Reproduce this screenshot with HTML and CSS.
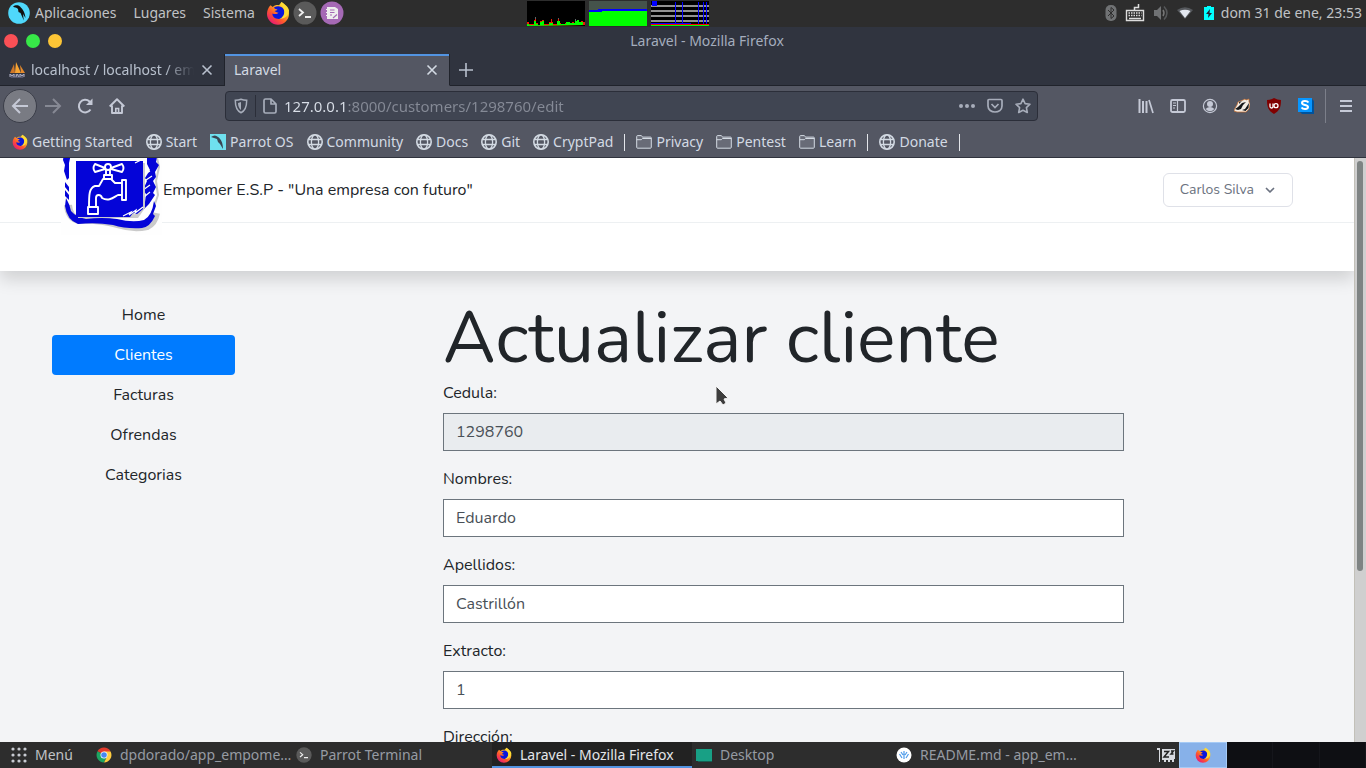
FILE: index.html
```html
<!DOCTYPE html>
<html lang="es">
<head>
<meta charset="utf-8">
<meta name="viewport" content="width=device-width, initial-scale=1">
<title>Laravel</title>
<link rel="stylesheet" href="styles.css">
</head>
<body class="desktop">
<svg class="sprite" aria-hidden="true">
  <defs>
    <linearGradient id="flame" x1="1" y1="0" x2="0.2" y2="1"><stop offset="0" stop-color="#fff44f"/><stop offset=".35" stop-color="#ffbd27"/><stop offset=".65" stop-color="#ff5a2b"/><stop offset="1" stop-color="#e5127d"/></linearGradient>
    <symbol id="firefox" viewBox="0 0 24 24"><path d="M4.500 4.200 6.800 6C8.500 4.300 10.500 3.800 13 4.200L15.500 1C19 3.500 23 7.500 23 12.700A11 11 0 0 1 1 12.700C1 9.500 2.300 6.500 4.500 4.200Z" fill="url(#flame)"/><path d="M8 6.500C11 4.500 15.500 4.800 17.500 8c2.500 5 .5 10-4.500 10-4.500 0-7-3-6.500-5.500 2 1 5 .8 6-.8-2 0-3-1-4-1.700 1-.5 2-.5 3-1.300-1-1-3-.4-3.500-2.200Z" fill="#0b16dc"/><path d="M15.500 1c-1 3 2.500 5 2.800 8.500.5 4.500-2.300 7.500-5 8.500 6 0 9.700-4 9.700-8.500C22.500 5.500 18 3 15.500 1Z" fill="#ffdc35"/></symbol>
    <symbol id="terminal" viewBox="0 0 24 24"><circle cx="12" cy="12" r="11.500" fill="#5a5a5a"/><path d="m6 8 4 3.500L6 15M12 16h6" fill="none" stroke="#eee" stroke-width="1.800"/></symbol>
    <symbol id="globe" viewBox="0 0 16 16"><g fill="none" stroke="currentColor" stroke-width="1.300"><circle cx="8" cy="8" r="7.200" stroke-width="1.600"/><ellipse cx="8" cy="8" rx="3.600" ry="7.200"/><path d="M1.500 5.500h13M1.500 10.500h13"/></g></symbol>
    <symbol id="folder" viewBox="0 0 16 16"><path d="M.7 13.300V2.500c0-.6.300-.9.900-.9h3.600c.6 0 .9.900 1.200 1.500h8.100c.5 0 .8.300.8.800v9.400c0 .5-.3.900-.8.900H1.500c-.5 0-.8-.4-.8-.9ZM.7 5.700h4.600l1.200-1.200h8.800" fill="#dcdee8" fill-opacity=".15" stroke="currentColor"/></symbol>
    <symbol id="close" viewBox="0 0 16 16"><path d="m3.500 3.500 9 9m0-9-9 9" fill="none" stroke="currentColor" stroke-width="1.600"/></symbol>
  </defs>
</svg>

<header class="panel">
  <nav class="panel-menu">
    <button class="panel-button"><svg class="icon-22" viewBox="0 0 22 22"><circle cx="11" cy="11" r="10.800" fill="#4fd8fb"/><path d="M5 4.500c2-1.500 5-2 7 0 3 3 5 6 5.500 11.500l-2.500-4 .8 6.500-3.300-7.500-2-1-.5-3C8.500 5 6.500 6 5 4.500Z" fill="#111"/></svg>Aplicaciones</button>
    <button class="panel-button">Lugares</button>
    <button class="panel-button">Sistema</button>
  </nav>
  <div class="launchers">
    <button class="plain" aria-label="Firefox"><svg class="icon-24"><use href="#firefox"/></svg></button>
    <button class="plain" aria-label="Terminal"><svg class="icon-24"><use href="#terminal"/></svg></button>
    <button class="plain" aria-label="Editor"><svg class="icon-24" viewBox="0 0 24 24"><circle cx="12" cy="12" r="11.500" fill="#a569b5"/><path d="M7 6h8l3 2v10H7Z" fill="#eee"/><path d="M6 8.500h2M6 11.500h2M6 14.500h2" stroke="#eee"/><path d="M10 9h4.500m-4.500 2.500h4.500M10 14h2m1 3 4-3.500" stroke="#a569b5" stroke-width="1.200"/></svg></button>
  </div>
  <div class="monitors">
    <svg class="monitor" viewBox="0 0 58 25"><path fill="#000" d="M0 0h58v25H0z"/><path d="M8.500 16v4M24.500 18v4M31.500 17v4M48.500 18v4" stroke="#5d6a6a"/><path d="M0 25V21h2v2h5v-4h1v-1h1v4h2v2h2v-4h2v-1h2v4h5v-2h2v-3h1v3h1v2h4v-1h1v-4h1v4h2v2h4v-2h2v-1h2v1h3v-1h2v1h2v-2h2v-1h1v2h2v-1h2v1h2v3Z" fill="#f01800"/><path d="M0 25V23h2v1h5v-4h2v3h2v1h2v-3h2v-1h2v4h5v-2h4v2h4v-4h3v3h6v-2h4v1h5v-2h2v-1h2v2h4v3Z" fill="#0f0"/></svg>
    <svg class="monitor" viewBox="0 0 58 25"><path fill="#45534b" d="M0 0h58v25H0z"/><path fill="#00f" d="M0 9h9V8h49v4H0z"/><path fill="#0f0" d="M0 11h13v-1h45v15H0z"/></svg>
    <svg class="monitor" viewBox="0 0 58 25"><path fill="#000" d="M0 0h58v25H0z"/><path d="M0 5h58M0 10h58M0 15h58M0 20h58" stroke="#929292" stroke-width="2"/><path d="M24.500 1v22M31.500 1v22M47.500 1v22M52.500 1v22M55.500 1v22" stroke="#00f"/><path fill="#00f" d="M1 0h5v5H1zM0 22h40v1H0z"/><path fill="red" d="M0 23h58v1H0z"/><path fill="#0f0" d="M0 24h58v1H0z"/></svg>
  </div>
  <div class="tray">
    <svg class="tray-bt" viewBox="0 0 12 18"><rect x=".5" y="1" width="11" height="16" rx="5" fill="#707274"/><path d="m3 6 6 6-3 2.500v-11L9 6l-6 6" fill="none" stroke="#2d2d2d"/></svg>
    <svg class="tray-kb" viewBox="0 0 20 20"><path d="M9.500 7V4.500h4V1" fill="none" stroke="#ddd" stroke-width="1.500"/><path d="M1.500 7.500h17v10h-17z" fill="none" stroke="#ddd" stroke-width="1.400"/><path d="M3.500 10h13M3.500 12.500h13" stroke="#ddd" stroke-width="1.500" stroke-dasharray="1.500 1"/><path d="M4 15.500h12" stroke="#ddd" stroke-width="1.500"/></svg>
    <svg class="tray-vol" viewBox="0 0 16 16"><path d="M1 5h3l4-4v14l-4-4H1Z" fill="#707274"/><path d="M10 5q2 3 0 6" fill="none" stroke="#777" stroke-width="1.500"/><path d="M11 1.500q6 6.500 0 13" fill="none" stroke="#56585a" stroke-width="1.500"/></svg>
    <svg class="tray-wifi" viewBox="0 0 16 16"><path d="M0 5Q8-.5 16 5l-8 9Z" fill="#55585c"/><path d="M2.500 6Q8 3.500 13.500 6L8 13Z" fill="#e3e7ef"/></svg>
    <svg class="tray-bat" viewBox="0 0 12 16"><path d="M1 2h3V1h4v1h3v13H1Z" fill="#0ff"/><path d="M7 4 3 9h2.500L5 13l4-5H6.500Z" fill="#223"/></svg>
    <span class="clock">dom 31 de ene, 23:53</span>
  </div>
</header>

<section class="browser">
  <div class="titlebar">
    <div class="lights"><button class="light red" aria-label="Cerrar"></button><button class="light green" aria-label="Maximizar"></button><button class="light yellow" aria-label="Minimizar"></button></div>
    <span class="window-title">Laravel - Mozilla Firefox</span>
  </div>
  <div class="tabs">
    <div class="tab"><svg class="icon-18" viewBox="0 0 18 18"><path d="M2 12 6 3l1 9Z" fill="#cf7728"/><path d="m7 12 1-11 5 11Z" fill="#f7a433"/><path d="m13 12-1-8 5 8Z" fill="#e58a2c"/><path d="M1 13h16l-2 4H3Z" fill="#53556b"/><path d="M2 16v-3l2 2 2-2v3m2 0 1-3 2 3m1 0v-3l2 2 2-2v3" fill="none" stroke="#a6a8ba"/></svg><span class="tab-label fade">localhost / localhost / emp</span><button class="plain tab-close" aria-label="Cerrar pestaña"><svg class="icon-16"><use href="#close"/></svg></button></div>
    <div class="tab active"><span class="tab-label">Laravel</span><button class="plain tab-close" aria-label="Cerrar pestaña"><svg class="icon-16"><use href="#close"/></svg></button></div>
    <button class="plain new-tab" aria-label="Nueva pestaña"><svg class="icon-16" viewBox="0 0 16 16"><path d="M8 1v14M1 8h14" stroke="currentColor" stroke-width="1.600"/></svg></button>
  </div>
  <div class="toolbar">
    <div class="nav-buttons">
      <button class="plain back" aria-label="Atrás"><svg class="icon-18" viewBox="0 0 18 18"><path d="M17 9H2m7-7L2 9l7 7" fill="none" stroke="currentColor" stroke-width="2"/></svg></button>
      <button class="plain nav-icon dim" aria-label="Adelante"><svg class="icon-18" viewBox="0 0 18 18"><path d="M1 9h15M9 2l7 7-7 7" fill="none" stroke="currentColor" stroke-width="2"/></svg></button>
      <button class="plain nav-icon" aria-label="Recargar"><svg class="icon-16" viewBox="0 0 16 16"><path d="M13.500 11.500A6.300 6.300 0 1 1 12.500 3.500L14 5" fill="none" stroke="currentColor" stroke-width="2"/><path d="M15.500.5v6.500H9Z" fill="currentColor"/></svg></button>
      <button class="plain nav-icon" aria-label="Inicio"><svg class="icon-16" viewBox="0 0 16 16"><path d="M.7 8.500 8 1.300l7.300 7.200M3 7.500V15h10V7.500" fill="none" stroke="currentColor" stroke-width="1.900" stroke-linejoin="round"/><path d="M6.800 15v-4.500h2.800V15" fill="none" stroke="currentColor" stroke-width="1.600"/></svg></button>
    </div>
    <div class="urlbar">
      <svg class="icon-16" viewBox="0 0 16 16"><path d="M8 1.300c2 .8 4 1 5.700 1C13.700 9 12 13 8 14.700 4 13 2.300 9 2.300 2.300c1.700 0 3.700-.2 5.700-1Z" fill="none" stroke="currentColor" stroke-width="1.500"/><path d="M8 4v8C6 10.500 5 8 5 5Z" fill="currentColor"/></svg>
      <span class="url-divider"></span>
      <svg class="icon-16" viewBox="0 0 16 16"><path d="M2 2.500q0-1.500 1.500-1.500H9l5 5v7.500q0 1.500-1.500 1.500h-9Q2 15 2 13.500ZM9 1v5h5" fill="none" stroke="currentColor" stroke-width="1.700" stroke-linejoin="round"/></svg>
      <input class="url" type="text" aria-label="Dirección web" value="127.0.0.1:8000/customers/1298760/edit">
      <div class="url-actions">
        <button class="plain" aria-label="Acciones"><svg class="icon-16" viewBox="0 0 16 16" fill="currentColor"><circle cx="2" cy="8" r="2"/><circle cx="8" cy="8" r="2"/><circle cx="14" cy="8" r="2"/></svg></button>
        <button class="plain" aria-label="Pocket"><svg class="icon-16" viewBox="0 0 16 16"><path d="M2 1.500h12q1 0 1 1V8c0 8-14 8-14 0V2.500q0-1 1-1Z" fill="none" stroke="currentColor" stroke-width="1.700"/><path d="m4.500 6 3.500 3.500L11.500 6" fill="none" stroke="currentColor" stroke-width="1.700"/></svg></button>
        <button class="plain" aria-label="Marcador"><svg class="icon-16" viewBox="0 0 16 16"><path d="m8 1.200 2.100 4.400 4.900.6-3.600 3.400.9 4.900L8 12.200l-4.300 2.300.9-4.900L1 6.200l4.900-.6Z" fill="none" stroke="currentColor" stroke-width="1.600" stroke-linejoin="round"/></svg></button>
      </div>
    </div>
    <div class="extensions">
      <button class="plain" aria-label="Biblioteca"><svg class="icon-16" viewBox="0 0 16 16"><path d="M1.500 1v14M5 3v12M8.500 3v12" stroke="currentColor" stroke-width="2"/><path d="m11 2 4 13" stroke="currentColor" stroke-width="1.700"/></svg></button>
      <button class="plain" aria-label="Barra lateral"><svg class="icon-16" viewBox="0 0 16 16"><rect x="1" y="2" width="14" height="12" rx="1.500" fill="none" stroke="currentColor" stroke-width="1.800"/><path d="M7.500 2v12M3 5h3M3 7.500h3M3 10h2" stroke="currentColor" stroke-width="1.200"/></svg></button>
      <button class="plain" aria-label="Cuenta"><svg class="icon-16" viewBox="0 0 16 16"><circle cx="8" cy="8" r="6.600" fill="none" stroke="currentColor" stroke-width="1.200"/><circle cx="8" cy="6" r="3" fill="currentColor"/><path d="M3.500 11q4.500-4 9 0Q8 15.500 3.500 11Z" fill="currentColor"/></svg></button>
      <button class="plain" aria-label="Privacy Badger"><svg class="icon-16" viewBox="0 0 16 16"><path d="M.5 11 3 7l1-3 5-2 2-1 1 1 3-1v3l1 2-1 5-3 3H3l-3-1Z" fill="#f3ece4" stroke="#c96d2b" stroke-width=".7"/><path d="m1 11 3-2 4-4 4-1-3 3-2 4-3 1Zm7 1 3-1 4-6-.5 5-3 3Z" fill="#151719"/><path d="m5 4 3-1-3 3Z" fill="#333"/></svg></button>
      <button class="plain" aria-label="uBlock Origin"><svg class="icon-16" viewBox="0 0 16 16"><path d="M8 0q3.500 2 7 2c0 8-2 11-7 14-5-3-7-6-7-14q3.500 0 7-2Z" fill="#800000"/><path d="M4 5.500v3q0 1.500 1.500 1.500T7 8.500v-3" fill="none" stroke="#fff" stroke-width="1.300"/><circle cx="10" cy="7.700" r="2" fill="none" stroke="#fff" stroke-width="1.300"/></svg></button>
      <button class="plain" aria-label="Stylus"><svg class="icon-16" viewBox="0 0 16 16"><path d="M2 14h12V1l2 2v13H4Z" fill="#00529b"/><path d="M0 0h14v14H0Z" fill="#0796ff"/><path d="M10.500 4.500C9 2.500 4 2.500 4 5c0 2.500 6 1.500 6 4 0 2.500-5 2.500-6.500.5" fill="none" stroke="#fff" stroke-width="2"/></svg></button>
    </div>
    <button class="plain app-menu" aria-label="Menú de Firefox"><svg class="icon-16" viewBox="0 0 16 16"><path d="M2 3h12M2 8h12M2 13h12" stroke="currentColor" stroke-width="2"/></svg></button>
  </div>
  <nav class="bookmarks">
    <a class="bookmark" href="#"><svg class="icon-16"><use href="#firefox"/></svg>Getting Started</a>
    <a class="bookmark" href="#"><svg class="icon-16"><use href="#globe"/></svg>Start</a>
    <a class="bookmark" href="#"><svg class="icon-16" viewBox="0 0 16 16"><path fill="#6fe0ee" d="M0 0h16v16H0z"/><path d="M1 3q4-3 7 0c3 2 5 6 5 12l-3-5-2-2-1-3-6-2Z" fill="#394653"/></svg>Parrot OS</a>
    <a class="bookmark" href="#"><svg class="icon-16"><use href="#globe"/></svg>Community</a>
    <a class="bookmark" href="#"><svg class="icon-16"><use href="#globe"/></svg>Docs</a>
    <a class="bookmark" href="#"><svg class="icon-16"><use href="#globe"/></svg>Git</a>
    <a class="bookmark" href="#"><svg class="icon-16"><use href="#globe"/></svg>CryptPad</a>
    <span class="separator"></span>
    <a class="bookmark" href="#"><svg class="icon-16"><use href="#folder"/></svg>Privacy</a>
    <a class="bookmark" href="#"><svg class="icon-16"><use href="#folder"/></svg>Pentest</a>
    <a class="bookmark" href="#"><svg class="icon-16"><use href="#folder"/></svg>Learn</a>
    <span class="separator"></span>
    <a class="bookmark" href="#"><svg class="icon-16"><use href="#globe"/></svg>Donate</a>
    <span class="separator"></span>
  </nav>
</section>

<div class="viewport">
  <div class="page">
    <div class="site-header">
      <div class="site-nav">
        <a class="brand" href="#">
          <svg class="logo" viewBox="0 0 101 90" aria-hidden="true">
            <path d="M0 0h101v90H0z" fill="#fefefe"/>
            <path d="M7 60q1 13 11 15 20-1 38 4 16 5 30 2 7-3 9-13" fill="none" stroke="#cacaca" stroke-width="8" stroke-linejoin="round"/>
            <path d="m95 8 3 14-3 14 2 14-4 12" fill="none" stroke="#cacaca" stroke-width="2"/>
            <path d="M4 0h8L8 18v15l-2 2-3-9 1-6-2-5Z" fill="#0404d8"/>
            <path d="m4 37 4 5v5l-4-5Zm0 8 4 5v5l-4-4Z" fill="#0404d8"/>
            <path d="M5 53q4 7 5 13 5 6 15 8 16-2 31 0 16 4 27 1 8-4 10-19l2 5-3 8 2 2q-5 11-13 12-16 1-29-3-17-3-35-1Q6 75 4 61Z" fill="#0404d8"/>
            <path d="m86 8 8-4 2 8-1 5 3 3-4 7 1 5-3 4 3 6-3 6 2 2-6 9-5 5-3-1 4-6 1-8-3-4 4-9-2-3 5-8-3-6Z" fill="#0404d8"/>
            <path d="m82 30 7-4m-7 11 9-6m-9 14 7-5m-6 12 6-5" stroke="#fff" stroke-width="1.200"/>
            <path d="M17 18h67v45l-7 10H17Z" fill="#cacacc"/>
            <path d="M15 16h67v48l-6 5-4-1-3 4H15Z" fill="#0404d8"/>
            <path d="m62 71 8-4-2 3 7-5-1 3 8-6m-8-44 6-3" stroke="#fff" stroke-width="1.200" fill="none"/>
            <g fill="none" stroke="#fff" stroke-width="1.900" stroke-linejoin="round"><path d="m44 23-10-4q-3 4 0 8l10-3m6 0 11 3q3-4 0-8l-11 4"/><circle cx="47" cy="22" r="3"/><path d="M45 25v5m4-5v5m-6 0h8v4h-8ZM42 34l-4 7h-4c-6 2-6 9-6 21h7V53c0-4 5-4 6 0 7 4 12-1 16-3h4V38h-7l-4-4Zm19 4v-3h4v20h-4v-5M27 62h10v7H27Z"/></g>
          </svg>
          <span>Empomer E.S.P - "Una empresa con futuro"</span>
        </a>
        <button class="user-menu">Carlos Silva<svg class="chevron" viewBox="0 0 16 16"><path d="m4.500 6.500 3.500 3.500 3.500-3.500" fill="none" stroke="currentColor" stroke-width="1.700" stroke-linecap="round" stroke-linejoin="round"/></svg></button>
      </div>
    </div>
    <div class="content">
      <nav class="side-nav">
        <a class="side-link" href="#">Home</a>
        <a class="side-link current" href="#">Clientes</a>
        <a class="side-link" href="#">Facturas</a>
        <a class="side-link" href="#">Ofrendas</a>
        <a class="side-link" href="#">Categorias</a>
      </nav>
      <main class="main">
        <h1 class="heading">Actualizar cliente</h1>
        <form>
          <div class="field"><label for="cedula">Cedula:</label><input class="control" id="cedula" type="text" value="1298760" readonly></div>
          <div class="field"><label for="nombres">Nombres:</label><input class="control" id="nombres" type="text" value="Eduardo"></div>
          <div class="field"><label for="apellidos">Apellidos:</label><input class="control" id="apellidos" type="text" value="Castrillón"></div>
          <div class="field"><label for="extracto">Extracto:</label><input class="control" id="extracto" type="text" value="1"></div>
          <div class="field"><label for="direccion">Dirección:</label><input class="control" id="direccion" type="text"></div>
        </form>
      </main>
    </div>
  </div>
  <div class="scrollbar"><div class="thumb"></div></div>
</div>

<footer class="taskbar">
  <button class="start"><svg class="icon-16" viewBox="0 0 16 16" fill="#c8cbd2"><circle cx="2" cy="2" r="1.600"/><circle cx="8" cy="2" r="1.600"/><circle cx="14" cy="2" r="1.600"/><circle cx="2" cy="8" r="1.600"/><circle cx="8" cy="8" r="1.600"/><circle cx="14" cy="8" r="1.600"/><circle cx="2" cy="14" r="1.600"/><circle cx="8" cy="14" r="1.600"/><circle cx="14" cy="14" r="1.600"/></svg>Menú</button>
  <button class="task"><svg class="icon-16" viewBox="0 0 16 16"><path d="M8 8 1.500 4.300A7.500 7.500 0 0 1 14.500 4.300Z" fill="#e33b2e"/><path d="M8 8 1.500 4.300A7.500 7.500 0 0 0 8 15.500L11 9Z" fill="#1da462"/><path d="M8 4.500h6.600A7.500 7.500 0 0 1 8 15.500L11.300 9Z" fill="#ffcd40"/><circle cx="8" cy="8" r="3.500" fill="#fff"/><circle cx="8" cy="8" r="2.800" fill="#4587f3"/></svg><span class="task-label">dpdorado/app_empome…</span></button>
  <button class="task"><svg class="icon-16"><use href="#terminal"/></svg><span class="task-label">Parrot Terminal</span></button>
  <button class="task selected"><svg class="icon-16"><use href="#firefox"/></svg><span class="task-label">Laravel - Mozilla Firefox</span></button>
  <button class="task"><svg class="icon-16" viewBox="0 0 16 16"><path d="M0 2h16v12H0z" fill="#18a085"/><path d="M2 14h14v1H2z" fill="#165f52"/></svg><span class="task-label">Desktop</span></button>
  <button class="task"><svg class="icon-16" viewBox="0 0 16 16"><circle cx="8" cy="8" r="7.500" fill="#fff"/><path d="M8 4v8M3.500 7 6 11m6.500-4L10 11M5 5l2 3m4-3L9 8" fill="none" stroke="#4e9bea" stroke-width="1.200"/></svg><span class="task-label">README.md - app_em…</span></button>
  <div class="task-tray">
    <svg class="icon-18" viewBox="0 0 18 18"><path d="M0 2h3v14H2V4H0ZM5 3h13v10h-1v3h-2v-2h-2v2h-2v-2H9v2H7v-2H5Z" fill="#d7dae0"/><path d="M7 5.500h4.500L7 11h5M14 5h2.500L14 8h2.500" fill="none" stroke="#222" stroke-width="1.500"/></svg>
  </div>
  <div class="workspaces">
    <button class="workspace on" aria-label="Área 1"><svg class="icon-16"><use href="#firefox"/></svg></button>
    <button class="workspace" aria-label="Área 2"></button>
    <button class="workspace" aria-label="Área 3"></button>
    <button class="workspace" aria-label="Área 4"></button>
  </div>
</footer>

<svg class="pointer" viewBox="0 0 14 22" aria-hidden="true"><path d="M1 1v18l4-3 3 4 3-2-2-4 4-1Z" fill="#3d3d3d" stroke="#f4f4f4"/></svg>
</body>
</html>
```
FILE: styles.css
```css
* { box-sizing: border-box; }

body {
  margin: 0;
  height: 100vh;
  display: flex;
  flex-direction: column;
  overflow: hidden;
  font: 14px/20px "Noto Sans", sans-serif;
  color: #d3dae3;
}

button { font: inherit; color: inherit; cursor: pointer; }
a { color: inherit; text-decoration: none; }
svg { display: block; flex: none; }

.sprite { position: absolute; width: 0; height: 0; }
.icon-16 { width: 16px; height: 16px; }
.icon-18 { width: 18px; height: 18px; }
.icon-22 { width: 22px; height: 22px; }
.icon-24 { width: 24px; height: 24px; }
.plain { display: grid; place-items: center; padding: 0; border: 0; background: none; }

/* Desktop panel */
.panel {
  flex: none;
  height: 27px;
  display: flex;
  align-items: center;
  padding: 0 4px 1px 8px;
  background: #2d2d2d;
  color: #c0c2c5;
}
.panel-menu { display: flex; gap: 17px; }
.panel-button { display: flex; align-items: center; gap: 5px; padding: 0; border: 0; background: none; }
.launchers { display: flex; gap: 3px; margin-left: 11px; }
.monitors { display: flex; gap: 4px; margin-left: 183px; }
.monitor { width: 58px; height: 25px; }
.tray { display: flex; align-items: center; margin-left: auto; }
.tray-bt { width: 12px; height: 18px; margin-right: 8px; }
.tray-kb { width: 20px; height: 20px; margin-right: 8px; }
.tray-vol { width: 16px; height: 16px; margin-right: 8px; }
.tray-wifi { width: 16px; height: 16px; margin-right: 10px; }
.tray-bat { width: 12px; height: 16px; margin-right: 6px; }

/* Browser window */
.browser { flex: none; background: #545763; color: #d3dae3; }
.titlebar {
  display: grid;
  grid-template-columns: 44px 1fr;
  align-items: center;
  height: 27px;
  padding-left: 4px;
  background: #30343f;
  color: #a4adbd;
  text-align: center;
}
.lights { display: flex; gap: 8px; }
.light { flex: none; width: 14px; height: 14px; padding: 0; border: 0; border-radius: 50%; }
.red { background: #fa5056; }
.green { background: #37e848; }
.yellow { background: #fcc536; }
.tabs { display: flex; height: 32px; background: #30343f; box-shadow: inset 0 -1px #20232b; }
.tab {
  display: flex;
  align-items: center;
  width: 225px;
  padding: 0 9px 0 8px;
  gap: 5px;
  border-right: 1px solid #20232b;
  border-bottom: 1px solid #20232b;
  color: #b8c0cd;
}
.tab.active {
  padding: 0 9px;
  border-bottom-color: transparent;
  background: #545763;
  box-shadow: inset 0 2px #5294e2;
  color: #d3dae3;
}
.tab-label { flex: 1; min-width: 0; overflow: hidden; white-space: nowrap; }
.fade { -webkit-mask-image: linear-gradient(90deg, #000 82%, transparent); mask-image: linear-gradient(90deg, #000 82%, transparent); }
.new-tab { width: 32px; padding-bottom: 1px; color: #b8c0cd; }

.toolbar { display: flex; align-items: center; height: 41px; padding: 0 0 1px 3px; color: #c5c9d6; }
.nav-buttons { display: flex; align-items: center; width: 222px; }
.back { width: 34px; height: 34px; border: 1px solid #3b3e49; border-radius: 50%; background: #797b83; }
.nav-icon { width: 32px; height: 32px; }
.dim { color: #868994; }
.urlbar {
  flex: 1;
  display: flex;
  align-items: center;
  height: 30px;
  padding: 0 6px 0 7px;
  border: 1px solid #2b2e39;
  border-radius: 4px;
  background: #404552;
  color: #a7adba;
}
.url-divider { width: 1px; height: 22px; margin: 0 6px; background: #2b2e39; }
.url {
  flex: 1;
  min-width: 0;
  height: 24px;
  margin-left: 6px;
  padding: 0;
  border: 0;
  outline: 0;
  font: 15px/24px "Noto Sans", sans-serif;
  color: #8b909c;
  background: linear-gradient(90deg, #d9dfe8 63px, #858a96 63px);
  -webkit-background-clip: text;
  background-clip: text;
  -webkit-text-fill-color: transparent;
}
.url-actions { display: flex; gap: 12px; }
.extensions { display: flex; gap: 16px; margin: 0 11px 0 100px; }
.app-menu { width: 41px; height: 34px; border-left: 1px solid #7c7f8a; }

.bookmarks {
  display: flex;
  align-items: center;
  gap: 13px;
  height: 31px;
  padding: 0 12px;
  border-bottom: 1px solid #30333d;
}
.bookmark { display: flex; align-items: center; gap: 4px; white-space: nowrap; }
.separator { width: 1px; height: 17px; margin: 0 -2px; background: #e3e5ea; }

/* Site */
.viewport { flex: 1; min-height: 0; display: flex; overflow: hidden; }
.page {
  flex: 1;
  overflow: hidden;
  background: #f3f4f6;
  color: #212529;
  font: 16px/24px Nunito, "Open Sans", sans-serif;
}
.site-header { height: 113px; background: #fff; box-shadow: 0 8px 16px rgba(0, 0, 0, .15); }
.site-nav {
  display: flex;
  align-items: center;
  justify-content: space-between;
  height: 65px;
  padding: 0 61px;
  border-bottom: 1px solid #edf0f2;
}
.brand { display: flex; align-items: center; gap: 1px; height: 64px; }
.logo { width: 101px; height: 90px; }
.user-menu {
  display: flex;
  align-items: center;
  gap: 8px;
  height: 34px;
  padding: 0 14px 0 16px;
  border: 1px solid #dfe1e8;
  border-radius: 6px;
  background: #fff;
  color: #6b7280;
  font-size: 14px;
}
.chevron { width: 16px; height: 16px; }
.content { display: flex; padding: 24px 52px; }
.side-nav { width: 183px; margin-right: 208px; text-align: center; }
.side-link { display: block; padding: 8px 16px; border-radius: 4px; }
.side-link.current { background: #007bff; color: #fff; }
.main { flex: 1; margin-right: 178px; }
.heading { margin: 0; font-size: 72px; line-height: 86px; font-weight: 400; white-space: nowrap; }
.field { margin-bottom: 16px; }
.field label { display: block; margin-bottom: 8px; }
.control {
  display: block;
  width: 100%;
  height: 38px;
  padding: 6px 12px;
  border: 1px solid #6c757d;
  background: #fff;
  color: #495057;
  font: inherit;
}
.control:read-only { background: #e9ecef; }
.scrollbar { width: 12px; padding: 3px 2px; background: #cfcfcf; border-left: 1px solid #c2c0b8; }
.thumb { width: 6px; height: 71%; border-radius: 3px; background: #7e8383; }

/* Task list */
.taskbar { flex: none; display: flex; height: 26px; background: #2d2d2d; color: #969ba3; }
.start { display: flex; align-items: center; gap: 8px; width: 92px; padding: 0 0 0 11px; border: 0; background: none; color: #c0c2c5; }
.task {
  flex: 0 1 200px;
  min-width: 0;
  display: flex;
  align-items: center;
  gap: 8px;
  padding: 2px 0 0 4px;
  border: 0;
  border-bottom: 2px solid transparent;
  background: none;
  white-space: nowrap;
}
.task-label { overflow: hidden; }
.task.selected { border-bottom-color: #5294e2; background: #222; color: #e4e6e9; }
.task-tray { display: flex; align-items: center; margin-left: auto; padding-right: 4px; }
.workspaces { display: flex; width: 187px; background: #0e0f13; }
.workspace { flex: 1; display: grid; place-items: center; padding: 0; border: 0; border-right: 1px solid #15161b; background: none; }
.workspace.on { border: 1px solid #a5caf5; background: #87b1e9; }

.pointer { position: absolute; left: 715px; top: 385px; width: 14px; height: 22px; }
```
